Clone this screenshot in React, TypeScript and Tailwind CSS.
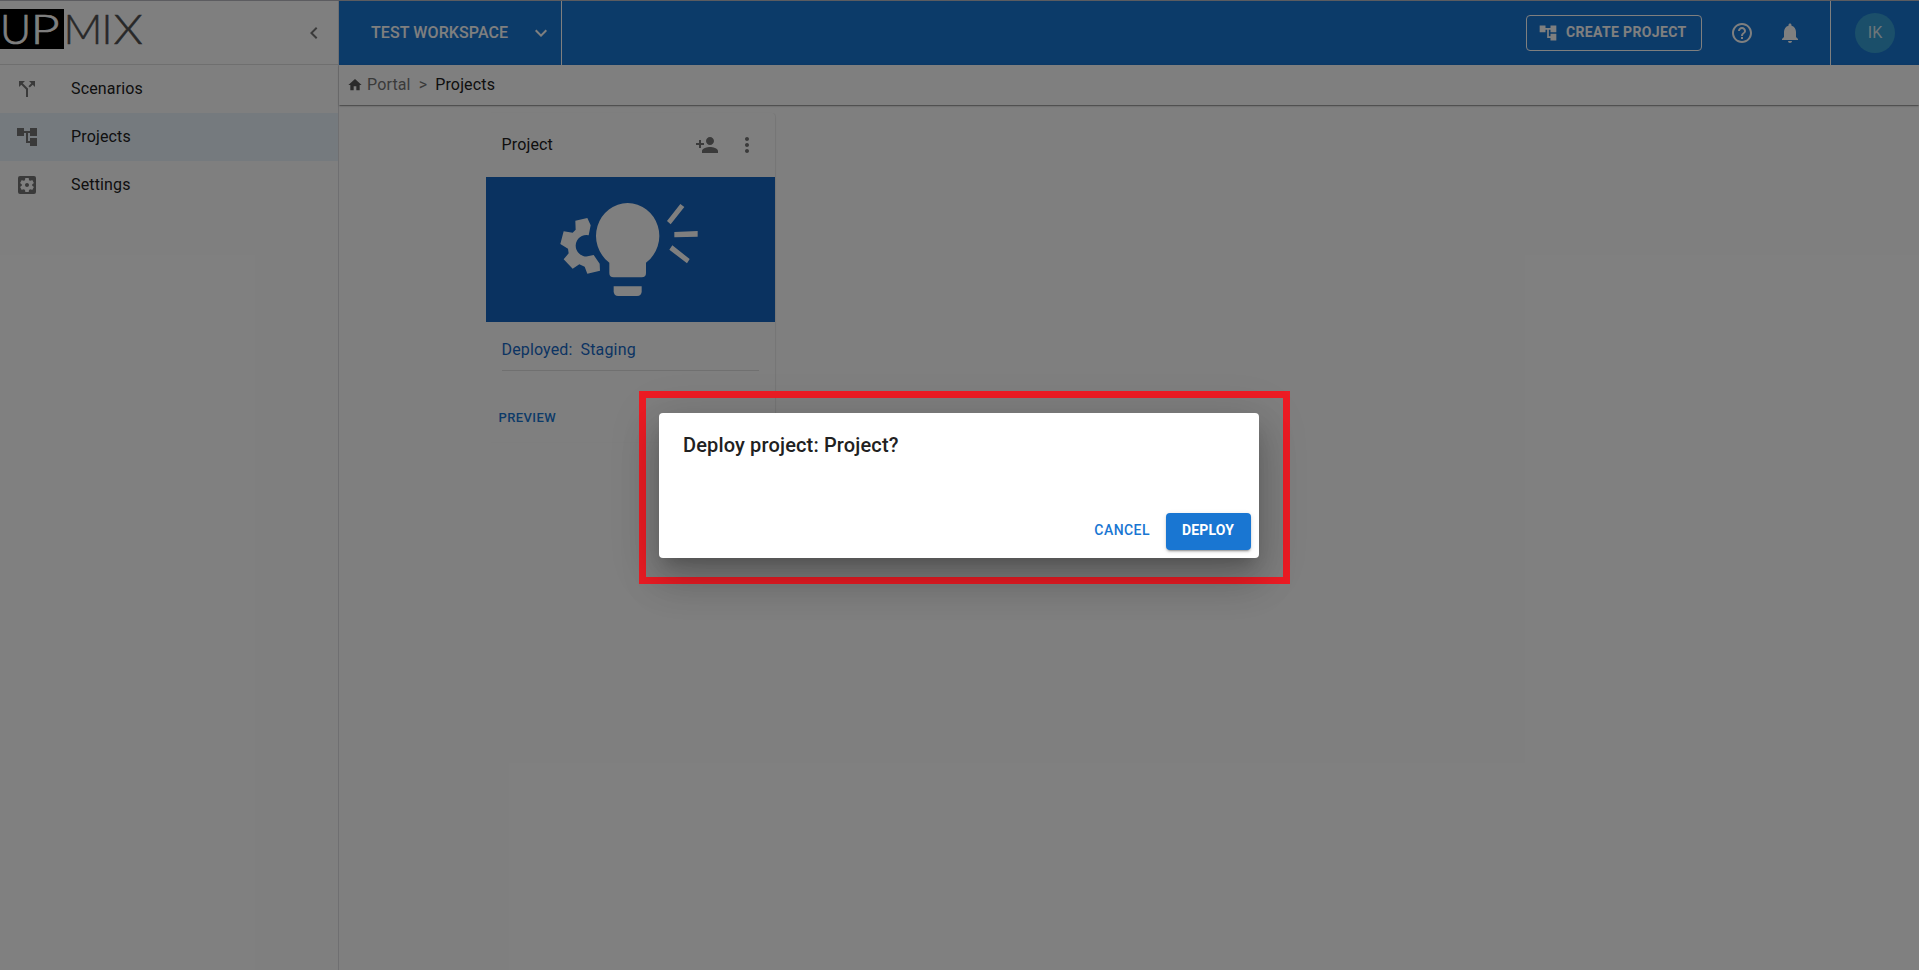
import React from "react";
import {
  MdAccountTree,
  MdCallSplit,
  MdChevronLeft,
  MdExpandMore,
  MdHelpOutline,
  MdHome,
  MdMoreVert,
  MdNotifications,
  MdPersonAdd,
  MdSettingsApplications,
} from "react-icons/md";

function Logo() {
  return (
    <svg className="h-[58px] w-[150px]" viewBox="0 0 150 58" fontFamily="Lato" fontWeight="300" fontSize="42">
      <rect y="8" width="64" height="40" fill="#000" />
      <g fill="#fff" stroke="#fff" strokeWidth="0.7">
        <text transform="translate(0 43) scale(1.02 1)">U</text>
        <text transform="translate(30.5 43) scale(1.2 1)">P</text>
      </g>
      <g fill="#505050" stroke="#505050" strokeWidth="0.5">
        <text transform="translate(63.5 43) scale(1.02 1)">M</text>
        <text transform="translate(101.5 43)">I</text>
        <text transform="translate(113.5 43) scale(1.12 1)">X</text>
      </g>
    </svg>
  );
}

function NavItem({ icon, label, active }: { icon: React.ReactNode; label: string; active?: boolean }) {
  return (
    <a className={`flex h-12 items-center pl-[15px] ${active ? "bg-[#ebf5fd]" : ""}`}>
      <span className="w-14 text-2xl text-[#757575]">{icon}</span>
      <span className="pb-[1px]">{label}</span>
    </a>
  );
}

function Sidebar() {
  return (
    <aside className="flex w-[339px] flex-col border-r border-[#dfdfe2]">
      <div className="flex h-16 items-start justify-between border-b border-[#dedede] pr-[12px]">
        <Logo />
        <MdChevronLeft className="mt-5 size-6 text-[#757575]" />
      </div>
      <nav>
        <NavItem icon={<MdCallSplit />} label="Scenarios" />
        <NavItem icon={<MdAccountTree />} label="Projects" active />
        <NavItem icon={<MdSettingsApplications />} label="Settings" />
      </nav>
    </aside>
  );
}

function TopBar() {
  return (
    <header className="flex h-16 bg-[#1976d2] text-white">
      <div className="flex w-[223px] items-center justify-between border-r border-white pr-2 pl-8">
        <span className="font-medium tracking-[0.1px] whitespace-nowrap">TEST WORKSPACE</span>
        <MdExpandMore className="size-6" />
      </div>
      <div className="ml-auto flex items-center">
        <button className="flex h-9 w-44 items-center rounded border border-white pl-[11px] text-sm font-bold tracking-[0.35px]">
          <MdAccountTree className="mr-2 size-5" />
          <span className="pb-[2px] whitespace-nowrap">CREATE PROJECT</span>
        </button>
        <MdHelpOutline className="ml-7 size-6" />
        <MdNotifications className="ml-6 size-6" />
      </div>
      <div className="ml-7 flex w-[89px] items-center border-l border-white pl-6">
        <span className="flex size-10 items-center justify-center rounded-full bg-[#369fd4] text-[#dcebf2]">IK</span>
      </div>
    </header>
  );
}

function Breadcrumb() {
  return (
    <div className="flex h-10 items-center bg-white pb-[1px] pl-[8px] shadow-[0_2px_1px_-1px_rgba(0,0,0,0.2),0_1px_1px_0_rgba(0,0,0,0.14),0_1px_3px_0_rgba(0,0,0,0.12)]">
      <MdHome className="size-4 text-[#555]" />
      <span className="ml-[4px] text-[#757575]">Portal</span>
      <span className="mx-2 text-[#757575]">&gt;</span>
      <span>Projects</span>
    </div>
  );
}

function IdeaArt() {
  return (
    <svg className="h-[145px] w-[289px] bg-[#1565c0]" viewBox="0 0 867 435" fill="#fff">
      <path d="M268 131 L304 123 L314 145 L308 175 A32 32 0 1 0 305 238 L323 234 L341 260 L342 281 L304 290 L296 269 L280 262 L260 275 L233 247 L248 229 L246 215 L223 201 L233 163 L260 167 L269 158 Z" />
      <circle cx="425" cy="177" r="104" fill="#1565c0" />
      <path d="M425 78 A97 99 0 0 1 480 257 V288 Q480 301 467 301 H383 Q370 301 370 288 V257 A97 99 0 0 1 425 78 Z" />
      <path d="M383 328 H467 V343 Q467 357 453 357 H397 Q383 357 383 343 Z" />
      <path d="M583 81 L595 90 L554 142 L543 132 Z M565 165 L635 162 V179 L565 181 Z M559 205 L611 246 L603 259 L550 218 Z" />
    </svg>
  );
}

function ProjectCard() {
  return (
    <article className="w-[289px] rounded bg-white shadow-[1px_0_1px_rgba(0,0,0,0.08)]">
      <div className="flex h-16 items-center pr-4 pl-[15.5px]">
        <span className="pb-[1px]">Project</span>
        <MdPersonAdd className="ml-auto size-6 text-[#757575]" />
        <MdMoreVert className="ml-4 size-6 text-[#757575]" />
      </div>
      <IdeaArt />
      <div className="mx-4 flex h-[49px] items-center border-b border-[#e0e0e0] pt-[7px] text-[#1769c6]">
        <span className="-ml-[0.5px]">Deployed:</span>
        <span className="ml-2">Staging</span>
      </div>
      <div className="flex h-[71px] items-end px-[12.5px] pb-[14px]">
        <button className="text-[13px] leading-[20px] font-medium tracking-[0.4px] text-[#1976d2]">PREVIEW</button>
      </div>
    </article>
  );
}

function DeployDialog() {
  return (
    <div className="absolute top-[391px] left-[639px] border-[7px] border-[#ed1c24] pt-[15px] pr-[24px] pb-[19px] pl-[13px]">
      <div className="flex h-[145px] w-[600px] flex-col justify-between rounded bg-white shadow-[0_11px_15px_-7px_rgba(0,0,0,0.2),0_24px_38px_3px_rgba(0,0,0,0.14),0_9px_46px_8px_rgba(0,0,0,0.12)]">
        <h2 className="px-6 pt-4 text-xl leading-8 font-medium tracking-[0.15px]">Deploy project: Project?</h2>
        <div className="flex items-center justify-end p-2 text-sm">
          <button className="mr-4 pb-[3px] font-medium tracking-[0.45px] text-[#1976d2]">CANCEL</button>
          <button className="h-[37px] w-[85px] rounded bg-[#1976d2] pr-[1px] pb-[4px] font-bold text-white shadow-[0_3px_1px_-2px_rgba(0,0,0,0.2),0_2px_2px_0_rgba(0,0,0,0.14),0_1px_5px_0_rgba(0,0,0,0.12)]">
            DEPLOY
          </button>
        </div>
      </div>
    </div>
  );
}

export default function App() {
  return (
    <div className="relative flex h-[970px] w-[1919px] flex-col overflow-hidden bg-white font-[Roboto,sans-serif] text-base tracking-[0.15px] text-[#212121]">
      <div className="h-px shrink-0 bg-[#b8b8c0]" />
      <div className="flex min-h-0 flex-1">
        <Sidebar />
        <main className="flex flex-1 flex-col">
          <TopBar />
          <Breadcrumb />
          <section className="pt-2 pl-[147px]">
            <ProjectCard />
          </section>
        </main>
      </div>
      <div className="absolute inset-0 bg-black/50" />
      <DeployDialog />
    </div>
  );
}
